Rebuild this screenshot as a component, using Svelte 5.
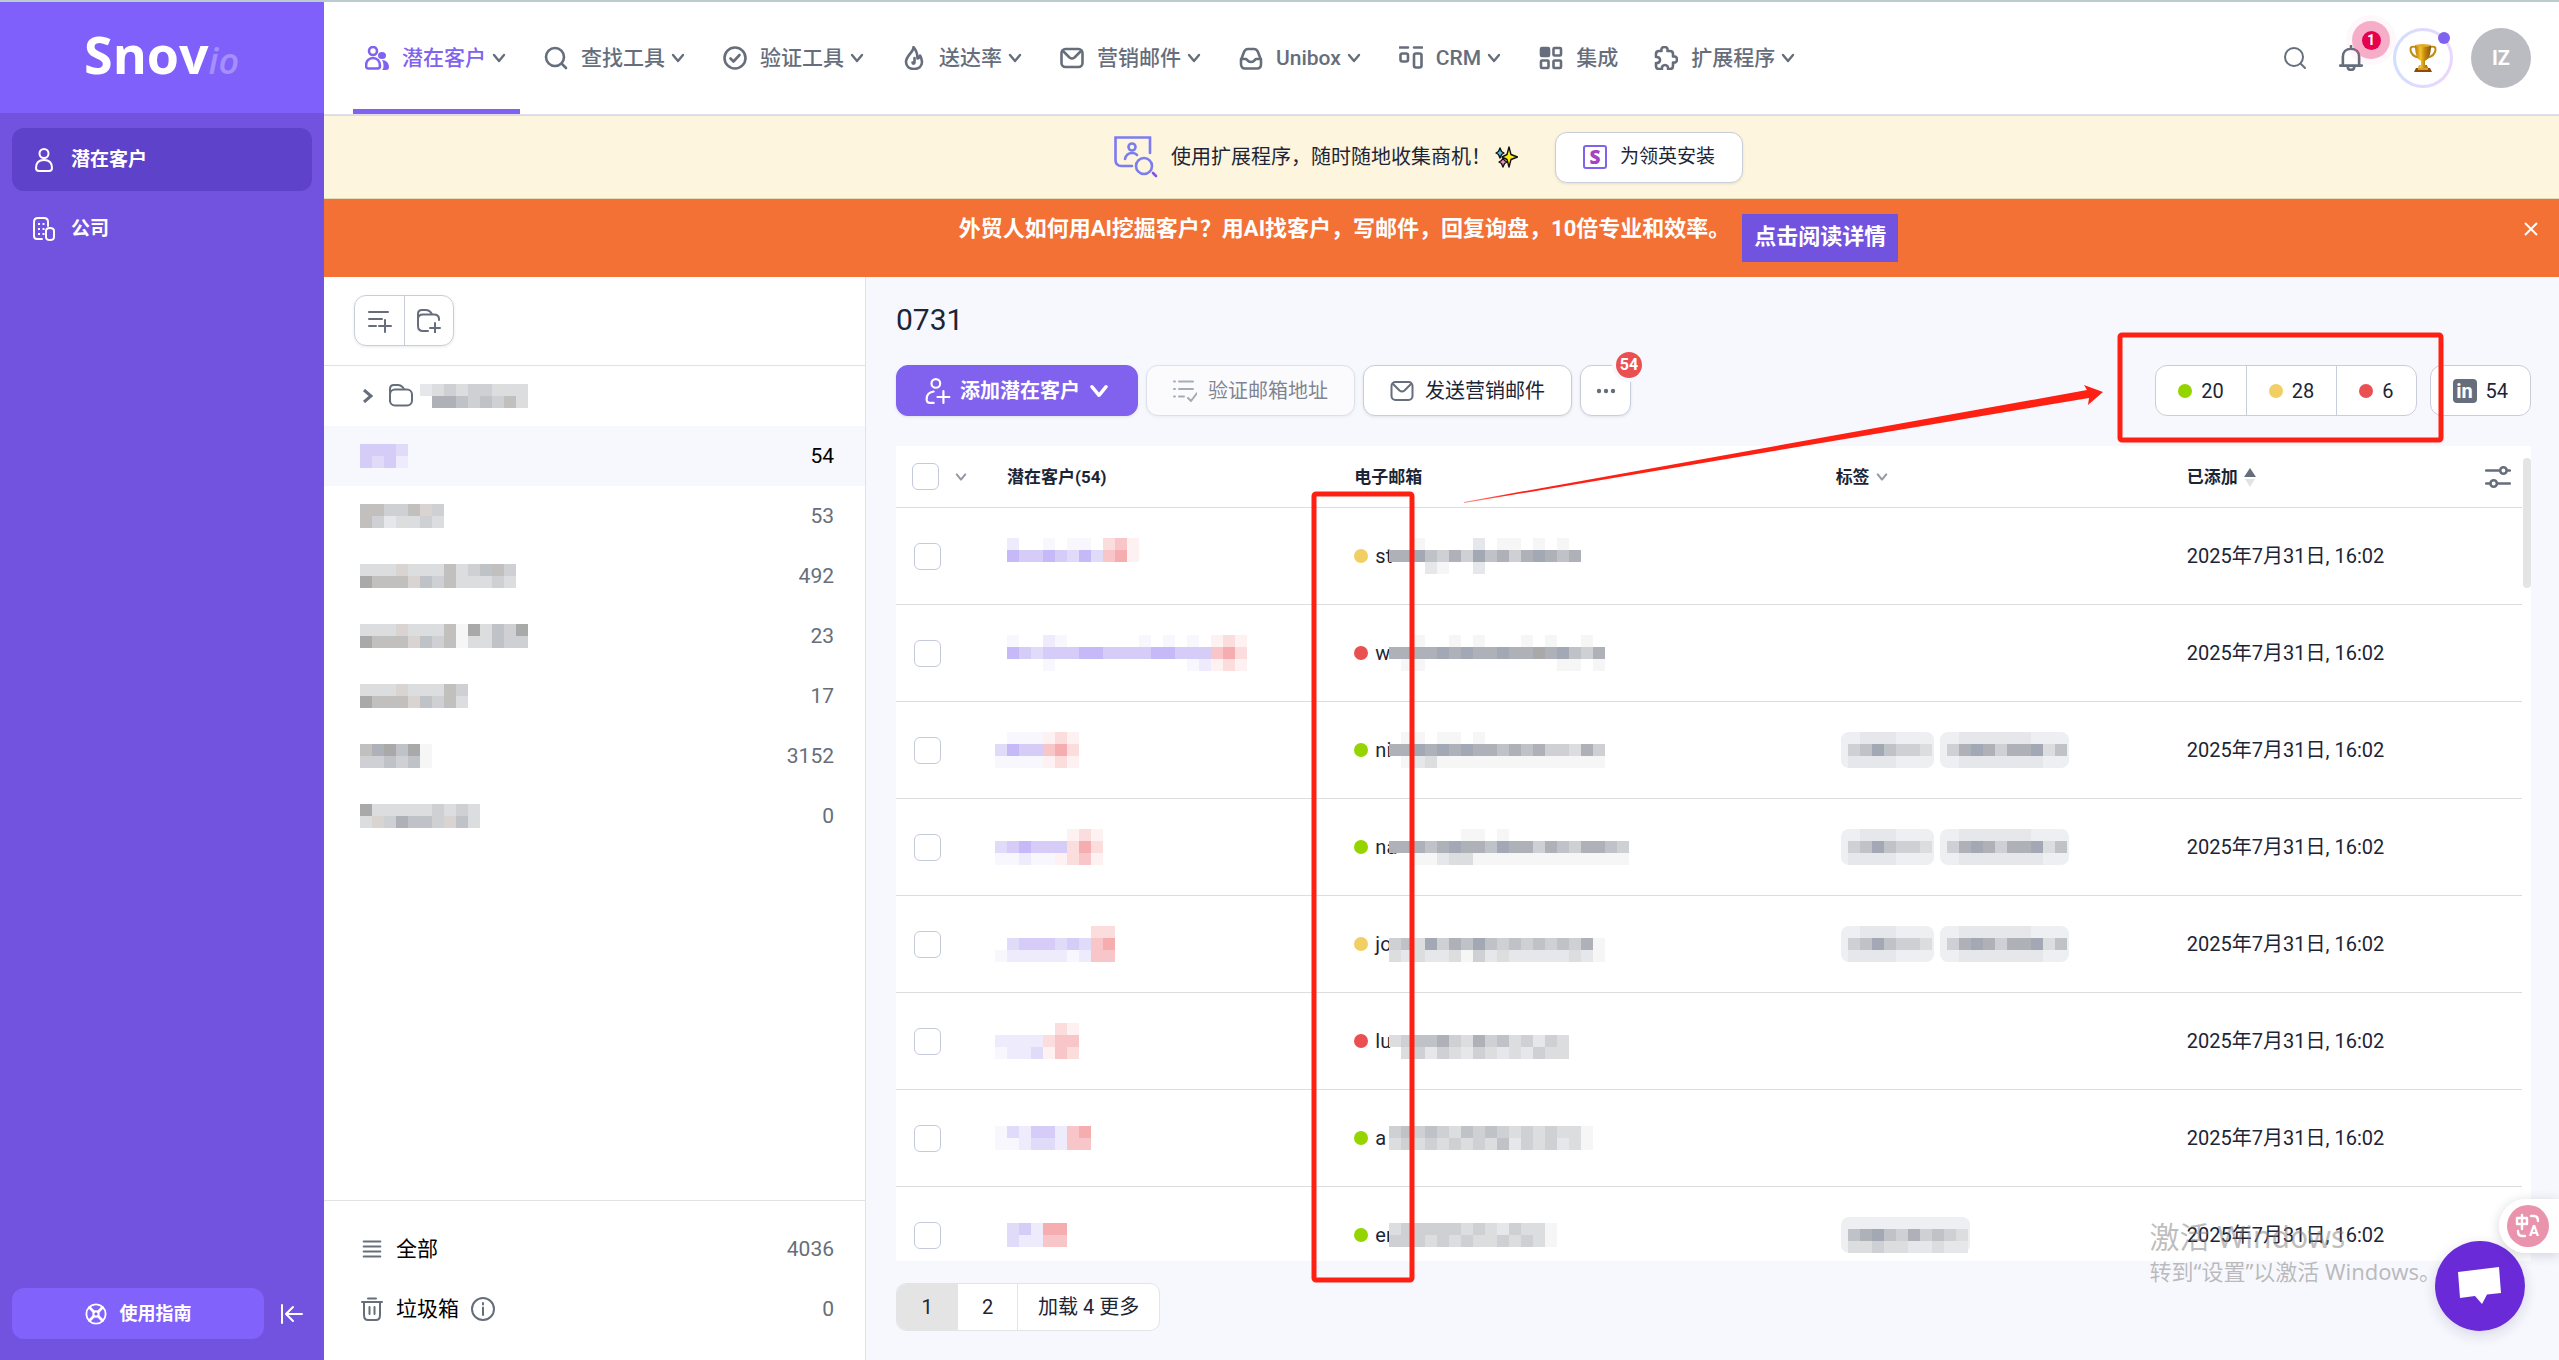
<script lang="ts">
	type Mosaic = string[];

	const icons: Record<string, string> = {
		users: '<circle cx="8" cy="5" r="4"/><path d="M1 20c0-5 3-8 7-8s7 3 7 8c0 1.500-1 2.500-2.500 2.500h-9C2 22.500 1 21.500 1 20z"/><path fill="currentColor" stroke="none" d="M17 6a4 3.500 0 1 1 0 7 4 3.500 0 0 1 0-7zM17 14c4 0 7 3 7 7 0 2-1 3-3 3h-4c1-1 1.500-2 1.500-4 0-2.500-.5-4.500-1.500-6z"/>',
		user: '<circle cx="12" cy="5.500" r="4.500"/><path d="M4 20c0-5 3-8 8-8s8 3 8 8c0 1.800-1 3-3 3H7c-2 0-3-1.200-3-3z"/>',
		search: '<circle cx="11" cy="11" r="9"/><path d="M18 18l4 4"/>',
		check: '<circle cx="12" cy="12" r="10.500"/><path d="M7.500 12.500l3 3L16.500 9"/>',
		fire: '<path d="M11.500 1C12 6 4 9.500 4 16c0 4.500 3.500 7 8 7s8-2.500 8-7c0-2.500-.8-4.500-2-6.500-.5 2-1.500 3-2.500 3C15.500 8.500 14 4 11.500 1z"/><path d="M12.500 12v4.500c0 1.500-2 1.500-2 0"/>',
		mail: '<rect x="1.500" y="3" width="21" height="18" rx="4"/><path d="M3 5l6.500 6.500c1.500 1.200 3.500 1.200 5 0L21 5"/>',
		inbox: '<path d="M2 14l3-8c.8-2 2-3 4-3h6c2 0 3.200 1 4 3l3 8v4c0 3-1.500 4.500-4 4.500H6c-2.500 0-4-1.500-4-4.500zM2 13h5c1 0 1.500 3 5 3s4-3 5-3h5"/>',
		crm: '<path d="M1 1.500h8M15 1.500h8"/><rect x="1.500" y="7.500" width="7.500" height="8" rx="2"/><rect x="15" y="7.500" width="7.500" height="14" rx="2"/>',
		grid: '<rect x="2" y="2" width="8" height="8" rx="1" fill="currentColor"/><rect x="14.500" y="2" width="7.500" height="7.500" rx="1"/><rect x="2" y="14.500" width="7.500" height="7.500" rx="1"/><rect x="14.500" y="14.500" width="7.500" height="7.500" rx="1"/>',
		puzzle: '<path d="M2 8c0-2 1-3 3-3h2.500C7 2.500 8.200 1 10.500 1S14 2.500 13.500 5H16c2 0 3 1 3 3v2.500c2.500-.5 4 .8 4 3s-1.500 3.500-4 3V20c0 2-1 3-3 3h-2c.3-2.500-1-4-3-4s-3.500 1.500-3 4H5c-2 0-3-1-3-3v-3c2.500.3 4-1 4-3s-1.500-3.300-4-3z"/>',
		bell: '<path d="M2 19h20M4.500 19v-8c0-4.500 3-7.500 7.500-7.500s7.500 3 7.500 7.500v8M12 3V1M9 20c0 2 1 3 3 3s3-1 3-3"/>',
		building: '<path d="M10 22H5c-2 0-3-1-3-3V5c0-2.500 1.500-4 4-4h6c2.500 0 4 1.500 4 4v4M14 14c0-2 1-3 4-3s4 1 4 3v6c0 2-1 3-4 3s-4-1-4-3z"/><path stroke-linecap="butt" stroke-dasharray="2 3" d="M7 6v12M11.500 6v12"/>',
		lifebuoy: '<circle cx="12" cy="12" r="10.500"/><circle cx="12" cy="12" r="3"/><path stroke-width="3" d="M9.800 9.800L5 5M14.200 9.800L19 5M9.800 14.200L5 19M14.200 14.200L19 19"/>',
		collapse: '<path d="M2 3v18M22 12H7M13 5l-7 7 7 7"/>',
		addList: '<path d="M1 3h19M1 10h13M1 17h7M11 17h12M17 11v12"/>',
		addFolder: '<path d="M11 22H6c-3 0-5-2-5-5V5c0-3 1-4 4-4h4c2 0 3 .5 4.500 2L15 5M1 10c0-3 2-4.500 5-4.500h11c3 0 5 1.500 5 4.500v1M13 19h10M18 14v10"/>',
		folder: '<path d="M1 17V5c0-3 1-4 4-4h4c2 0 3 .5 4.500 2L15 5"/><rect x="1" y="5.500" width="22" height="16" rx="5"/>',
		lines: '<path d="M2 3h20M2 9h20M2 15h20M2 21h20"/>',
		trash: '<path d="M2 5h20M8 1.500h8M4 5v13c0 3 1 5 4 5h8c3 0 4-2 4-5V5M9.500 10v7M14.500 10v7"/>',
		info: '<circle cx="12" cy="12" r="11"/><path d="M12 10.500V18M12 6v1.500"/>',
		addUser: '<circle cx="10" cy="5" r="4"/><path d="M8 23H5c-2 0-3.500-1.200-3.500-3.500C1.500 15 4 13 8 12.500M17 12v11M11.500 17.500h11"/>',
		verify: '<path d="M1 2.500h1M6 2.500h14M1 10h1M6 10h14M1 17.500h1M6 17.500h5M15 19l3 3 6-8"/>',
		sliders: '<path d="M1 6h12M21 6h2M1 18h4M12 18h11"/><circle cx="17" cy="6" r="3"/><circle cx="8" cy="18" r="3"/>'
	};

	const navItems = [
		{ label: '潜在客户', icon: 'users', menu: true, active: true },
		{ label: '查找工具', icon: 'search', menu: true },
		{ label: '验证工具', icon: 'check', menu: true },
		{ label: '送达率', icon: 'fire', menu: true },
		{ label: '营销邮件', icon: 'mail', menu: true },
		{ label: 'Unibox', icon: 'inbox', menu: true },
		{ label: 'CRM', icon: 'crm', menu: true },
		{ label: '集成', icon: 'grid', menu: false },
		{ label: '扩展程序', icon: 'puzzle', menu: true }
	];

	// One letter per 12px cell; a dot leaves the cell empty
	const palette: Record<string, string> = {
		a: '#c6b9f7', b: '#d5ccf8', c: '#e1dbfa', d: '#eeebfd', e: '#f8f7fe',
		p: '#f5adb0', q: '#f8c6c8', r: '#fbdddd', s: '#fef1f1',
		'0': '#a9a9a9', '1': '#a3a9b4', '2': '#aeb1b8', '3': '#bfc2c6', '4': '#ced0d3',
		'5': '#dcdddf', '6': '#e6e7eb', '7': '#f6f6f7', n: '#d9d4d1', m: '#c2c0bf'
	};
	const CELL = 12;

	const folders: { mosaic: Mosaic; count: number; selected?: boolean }[] = [
		{ mosaic: ['bbbc', 'bcbd'], count: 54, selected: true },
		{ mosaic: ['mm44mn4', 'm465545'], count: 53 },
		{ mosaic: ['555n555m543m4', '0mmmn34m55545'], count: 492 },
		{ mosaic: ['555n555m705340', '0mmmn34m755344'], count: 23 },
		{ mosaic: ['555n555m4', '0mmmn34m5'], count: 17 },
		{ mosaic: ['m20307', '443437'], count: 3152 },
		{ mosaic: ['0555554545', '5n42334n35'], count: 0 }
	];

	const tagPair: Mosaic[] = [
		['.666...', '4313445', '6666...'],
		['.666666...', '4212422153', '.6666666..']
	];

	const leads: { name: Mosaic; status: string; start: string; email: Mosaic; tags: Mosaic[] }[] = [
		{
			name: ['.d..e.ee.rqs', '.abbabcacqps', '............'],
			status: 'yellow', start: 'st',
			email: ['..7....6.77.7.7.', '2213424132421232', '...67..6........'],
			tags: []
		},
		{
			name: ['.e..de......e.e.e.srs', '.abcbbbaabbbbaabbbqpr', '....e...........edsrs'],
			status: 'red', start: 'w',
			email: ['..7..7.7...7.7..7.', '222212122122021342', '.77...........77.7'],
			tags: []
		},
		{
			name: ['.eeesrs', 'cabbqpr', 'eeeesrs'],
			status: 'green', start: 'ni',
			email: ['.77.77.7..........', '221212122323244524', '.76577777777777777'],
			tags: tagPair
		},
		{
			name: ['......srs', 'cbabbbrpr', 'eedeesrqs'],
			status: 'green', start: 'na',
			email: ['......77.7..........', '22232122312242342234', '..776557777777777777'],
			tags: tagPair
		},
		{
			name: ['........rr', '.cbbbcbcqp', 'edddddedqq'],
			status: 'yellow', start: 'jo',
			email: ['..................', '435142313434343427', '565665746566666567'],
			tags: tagPair
		},
		{
			name: ['.....rs', 'ddddrqq', 'eddcsqr'],
			status: 'red', start: 'lu',
			email: ['...............', '543324524354645', '.54645645656455'],
			tags: []
		},
		{
			name: ['ecdbbdqp', 'eedccdqq'],
			status: 'green', start: 'a',
			email: ['43434534345454557', '54545454536454657'],
			tags: []
		},
		{
			name: ['.cbdpp', '.cddqq'],
			status: 'green', start: 'en',
			email: ['54444454564557', '44454545545457'],
			tags: [['..........', '3213424345', '5545566566']]
		}
	];

	const stats = [
		{ status: 'green', value: 20 },
		{ status: 'yellow', value: 28 },
		{ status: 'red', value: 6 }
	];
</script>

{#snippet icon(name: string, size = 24, weight = 2)}
	<svg
		class="icon"
		width={size}
		height={size}
		viewBox="0 0 24 24"
		fill="none"
		stroke="currentColor"
		stroke-width={weight}
		stroke-linecap="round"
		stroke-linejoin="round"
		aria-hidden="true">{@html icons[name]}</svg
	>
{/snippet}

{#snippet chevron(size = 14)}
	<svg class="icon" width={size} height={size} viewBox="0 0 14 14" fill="none" stroke="currentColor" stroke-width="2.4" stroke-linecap="round" stroke-linejoin="round" aria-hidden="true">
		<path d="M2 4l5 6 5-6" />
	</svg>
{/snippet}

{#snippet mosaic(rows: Mosaic)}
	<svg class="mosaic" width={rows[0].length * CELL} height={rows.length * CELL} shape-rendering="crispEdges" aria-hidden="true">
		{#each rows as row, y}
			{#each row as cell, x}
				{#if cell !== '.'}
					<rect x={x * CELL} y={y * CELL} width={CELL} height={CELL} fill={palette[cell]} />
				{/if}
			{/each}
		{/each}
	</svg>
{/snippet}

<div class="page">
	<aside class="sidebar">
		<a class="logo" href="#home">Snov<i>io</i></a>
		<nav class="side-nav">
			<a class="side-item active" href="#leads">{@render icon('user')}<span>潜在客户</span></a>
			<a class="side-item" href="#companies">{@render icon('building')}<span>公司</span></a>
		</nav>
		<div class="side-footer">
			<button class="guide">{@render icon('lifebuoy', 22)}<span>使用指南</span></button>
			<button class="collapse" aria-label="收起">{@render icon('collapse')}</button>
		</div>
	</aside>

	<div class="content">
		<header class="topbar">
			<nav class="nav">
				{#each navItems as item}
					<a class="nav-item" class:active={item.active} href="#{item.icon}">
						{@render icon(item.icon, 24, 2.6)}
						<span>{item.label}</span>
						{#if item.menu}<span class="nav-chevron">{@render chevron()}</span>{/if}
					</a>
				{/each}
			</nav>
			<div class="account">
				<button class="plain" aria-label="搜索">{@render icon('search')}</button>
				<button class="plain bell" aria-label="通知">
					{@render icon('bell', 26, 2.4)}
					<span class="bell-badge"><b>1</b></span>
				</button>
				<button class="trophy" aria-label="成就">
					<svg width="28" height="30" viewBox="0 0 28 30" aria-hidden="true">
						<defs>
							<linearGradient id="gold" x1="0" x2="1">
								<stop offset="0" stop-color="#b87a08" />
								<stop offset=".35" stop-color="#f3c32c" />
								<stop offset=".6" stop-color="#c48a0e" />
								<stop offset="1" stop-color="#8a5706" />
							</linearGradient>
						</defs>
						<path d="M7 4C3 3 1 4 1.500 7c.5 3.500 3 6.500 8 7.500M21 4c4-1 6 0 5.500 3-.5 3.500-3 6.500-8 7.500" fill="none" stroke="#c08a17" stroke-width="2" />
						<path d="M6 2h16c0 9-2 14-6 16v4h2l1 3H9l1-3h2v-4C8 16 6 11 6 2z" fill="url(#gold)" />
						<path d="M7 25h14l2 4H5z" fill="#8d4a0b" />
						<path d="M9 25h10v2H9z" fill="#d6a12a" />
						<ellipse cx="14" cy="2.500" rx="8" ry="1.500" fill="#e0ac2c" />
					</svg>
					<span class="trophy-dot"></span>
				</button>
				<button class="avatar">IZ</button>
			</div>
		</header>

		<section class="promo">
			<svg width="44" height="42" viewBox="0 0 44 42" fill="none" stroke="#7b7cf0" stroke-width="2.6" stroke-linecap="round" aria-hidden="true">
				<path d="M36 17V1.500H1.500V24c0 4 2 6 6 6H18" />
				<circle cx="18" cy="11" r="3.500" />
				<path d="M11 23c1-4 3.500-6 7-6 2 0 4 .6 5 2" />
				<circle cx="30" cy="30" r="8" />
				<path d="M39 37l3 3" stroke="#7f55ea" />
			</svg>
			<span class="promo-text">使用扩展程序，随时随地收集商机！</span>
			<svg width="23" height="22" viewBox="0 0 23 22" stroke="#111" stroke-width="1.4" stroke-linejoin="round" aria-hidden="true">
				<path d="M5 2l1.500 3.500L9 7 6.500 8.500 5 12 3.500 8.500 1 7l2.500-1.500z" fill="#5cc4ee" />
				<path d="M8 12l1.500 2.500L12 16l-2.500 1.500L8 21l-1.500-3.500L4 16l2.500-1.500z" fill="#f492c4" />
				<path d="M14 1l2 7.500 6.500 2.500-6.500 2.500-2 7.500-2-7.500L7 11l5-2.500z" fill="#ffec15" />
			</svg>
			<button class="promo-button">
				<span class="s-mark">S</span>
				<span>为领英安装</span>
			</button>
		</section>

		<section class="banner">
			<p>外贸人如何用AI挖掘客户？用AI找客户，写邮件，回复询盘，10倍专业和效率。</p>
			<a class="banner-link" href="#read">点击阅读详情</a>
			<button class="banner-close" aria-label="关闭">
				<svg width="14" height="14" viewBox="0 0 14 14" stroke="#fff" stroke-width="2" aria-hidden="true"><path d="M1 1l12 12M13 1L1 13" /></svg>
			</button>
		</section>

		<div class="workspace">
			<section class="lists">
				<div class="lists-head">
					<div class="split">
						<button aria-label="新建列表">{@render icon('addList')}</button>
						<button aria-label="新建文件夹">{@render icon('addFolder')}</button>
					</div>
				</div>
				<div class="folder-row">
					<svg class="icon" width="12" height="14" viewBox="0 0 12 14" fill="none" stroke="currentColor" stroke-width="3" aria-hidden="true"><path d="M2 1l7 6-7 6" /></svg>
					<span class="folder-name">{@render icon('folder')}{@render mosaic(['654544555', '.223434m5'])}</span>
				</div>
				<ul class="list-rows">
					{#each folders as folder}
						<li class="list-row" class:selected={folder.selected}>
							{@render mosaic(folder.mosaic)}
							<span class="count">{folder.count}</span>
						</li>
					{/each}
				</ul>
				<ul class="list-rows list-foot">
					<li class="list-row">{@render icon('lines', 20, 2.4)}<span>全部</span><span class="count">4036</span></li>
					<li class="list-row">{@render icon('trash')}<span>垃圾箱</span>{@render icon('info')}<span class="count">0</span></li>
				</ul>
			</section>

			<main class="main">
				<h1>0731</h1>
				<div class="toolbar">
					<button class="btn primary">{@render icon('addUser', 26)}<span>添加潜在客户</span>{@render chevron(20)}</button>
					<button class="btn" disabled>{@render icon('verify')}<span>验证邮箱地址</span></button>
					<button class="btn">{@render icon('mail')}<span>发送营销邮件</span></button>
					<button class="btn more" aria-label="更多">
						<svg width="20" height="6" viewBox="0 0 20 6" fill="#666e7c" aria-hidden="true"><circle cx="3" cy="3" r="2.2" /><circle cx="10" cy="3" r="2.2" /><circle cx="17" cy="3" r="2.2" /></svg>
						<span class="more-badge">54</span>
					</button>
					<div class="stats">
						{#each stats as stat}
							<button><span class="dot {stat.status}"></span>{stat.value}</button>
						{/each}
					</div>
					<div class="stats linkedin">
						<button><span class="in-mark">in</span>54</button>
					</div>
				</div>

				<div class="table-wrap">
					<table>
						<colgroup>
							<col class="c-check" /><col class="c-name" /><col class="c-email" /><col class="c-tags" /><col />
						</colgroup>
						<thead>
							<tr>
								<th class="check-cell">
									<div class="head-check">
										<input type="checkbox" aria-label="全选" />
										<span class="muted">{@render chevron(12)}</span>
									</div>
								</th>
								<th class="name-head">潜在客户(54)</th>
								<th>电子邮箱</th>
								<th><span class="head-flex">标签 <span class="muted">{@render chevron(12)}</span></span></th>
								<th>
									<span class="head-flex">
										已添加
										<svg width="12" height="20" viewBox="0 0 12 20" aria-hidden="true"><path d="M6 1l6 9H0z" fill="#666e7c" /><path d="M6 20l-5-8h10z" fill="#e2e3e6" /></svg>
										<button class="plain settings" aria-label="列设置">{@render icon('sliders', 26, 2.4)}</button>
									</span>
								</th>
							</tr>
						</thead>
						<tbody>
							{#each leads as lead}
								<tr>
									<td class="check-cell"><input type="checkbox" aria-label="选择" /></td>
									<td>{@render mosaic(lead.name)}</td>
									<td>
										<div class="email">
											<span class="dot {lead.status}"></span>
											<span class="email-start">{lead.start}</span>
											{@render mosaic(lead.email)}
										</div>
									</td>
									<td>
										<div class="tags">
											{#each lead.tags as tag}
												<span class="tag">{@render mosaic(tag)}</span>
											{/each}
										</div>
									</td>
									<td>2025年7月31日, 16:02</td>
								</tr>
							{/each}
						</tbody>
					</table>
					<div class="scroll-thumb"></div>
				</div>

				<div class="pager">
					<button class="current">1</button>
					<button>2</button>
					<button>加载 4 更多</button>
				</div>
			</main>
		</div>
	</div>

	<div class="watermark">
		<div class="watermark-title">激活 Windows</div>
		<div>转到“设置”以激活 Windows。</div>
	</div>

	<button class="chat" aria-label="聊天">
		<svg width="44" height="38" viewBox="0 0 44 38" fill="#fff" aria-hidden="true"><path d="M0 5L41 0l2 26-14 1.500L24 37l-7-8-15 2z" /></svg>
	</button>

	<div class="translate">
		<svg width="42" height="42" viewBox="0 0 42 42" aria-hidden="true">
			<circle cx="21" cy="21" r="21" fill="#e993ac" />
			<g fill="none" stroke="#fff" stroke-width="2.4" stroke-linecap="round" stroke-linejoin="round">
				<path d="M10 13h10v6H10zM15 10v14M24 11h3c3 0 4 2 4 5M11 26c0 3 1 5 4 5h3" />
			</g>
			<text x="22" y="31" font-size="15" font-weight="700" fill="#fff">A</text>
		</svg>
	</div>

	<svg class="annotations" aria-hidden="true">
		<defs>
			<linearGradient id="tail" gradientUnits="userSpaceOnUse" x1="1464" y1="0" x2="1560" y2="0">
				<stop offset="0" stop-color="#ff2014" stop-opacity="0.5" />
				<stop offset="0.5" stop-color="#ff2014" />
			</linearGradient>
		</defs>
		<rect x="1314" y="494" width="98" height="786" rx="2" />
		<rect x="2120" y="335" width="321" height="105" rx="2" />
		<path d="M1464 502L2087 390 2084 385 2103 392 2088 405 2089 398 1464 503z" fill="url(#tail)" />
	</svg>
</div>

<style>
	:global(body) {
		margin: 0;
	}
	.page {
		position: relative;
		display: flex;
		box-sizing: border-box;
		height: 100vh;
		overflow: hidden;
		border-top: 2px solid #bccccc;
		background: #f7f8fd;
		color: #1c2536;
		font-family: Roboto, 'Noto Sans CJK SC', sans-serif;
		font-size: 20px;
		line-height: 30px;
	}
	button {
		padding: 0;
		border: 0;
		background: none;
		color: inherit;
		font: inherit;
		cursor: pointer;
	}
	a {
		color: inherit;
		text-decoration: none;
	}
	ul {
		margin: 0;
		padding: 0;
		list-style: none;
	}
	.icon,
	.mosaic {
		display: block;
		flex: none;
	}

	/* Sidebar */
	.sidebar {
		display: flex;
		flex-direction: column;
		flex: none;
		width: 324px;
		background: #7153e0;
		color: #fff;
	}
	.logo {
		display: flex;
		align-items: baseline;
		box-sizing: border-box;
		height: 111px;
		padding: 18px 0 0 84px;
		background: #8060fb;
		font-family: 'Open Sans', sans-serif;
		font-size: 52px;
		font-weight: 700;
		line-height: 68px;
	}
	.logo i {
		color: #a48ffc;
		font-size: 36px;
		font-weight: 600;
	}
	.side-nav {
		display: flex;
		flex-direction: column;
		flex: 1;
		gap: 6px;
		padding: 15px 12px;
	}
	.side-item {
		display: flex;
		align-items: center;
		gap: 15px;
		height: 63px;
		padding-left: 20px;
		border-radius: 12px;
		font-size: 19px;
		font-weight: 700;
	}
	.side-item.active {
		background: #5e42ca;
	}
	.side-footer {
		display: flex;
		align-items: center;
		gap: 16px;
		padding: 0 20px 21px 12px;
	}
	.guide {
		display: flex;
		align-items: center;
		justify-content: center;
		flex: 1;
		gap: 13px;
		height: 51px;
		border-radius: 12px;
		background: #8162fa;
		font-size: 18px;
		font-weight: 700;
	}

	/* Top bar */
	.content {
		display: flex;
		flex-direction: column;
		flex: 1;
		min-width: 0;
	}
	.topbar {
		display: flex;
		justify-content: space-between;
		height: 112px;
		padding: 0 28px 0 29px;
		border-bottom: 1px solid #dfe0ec;
		background: #fff;
	}
	.nav {
		display: flex;
		gap: 12px;
	}
	.nav-item {
		display: flex;
		align-items: center;
		gap: 13px;
		padding: 5px 12px 0;
		border-bottom: 5px solid transparent;
		color: #666e7c;
		font-size: 21px;
		font-weight: 500;
	}
	.nav-item.active {
		border-color: #8062f0;
		border-radius: 4px 4px 0 0;
		color: #8062f0;
	}
	.nav-chevron {
		width: 16px;
		margin-left: -7px;
		color: #666e7c;
	}
	.account {
		display: flex;
		align-items: center;
		color: #666e7c;
	}
	.bell {
		position: relative;
		margin: 0 29px 0 31px;
	}
	.bell-badge {
		position: absolute;
		top: -24px;
		left: 14px;
		display: flex;
		align-items: center;
		justify-content: center;
		width: 38px;
		height: 38px;
		border-radius: 50%;
		background: rgba(236, 76, 134, 0.45);
		box-shadow: 0 0 0 6px rgba(236, 76, 134, 0.04);
	}
	.bell-badge b {
		width: 19px;
		height: 19px;
		border-radius: 50%;
		background: #e6004d;
		color: #fff;
		font-size: 14px;
		line-height: 19px;
	}
	.trophy {
		position: relative;
		display: flex;
		align-items: center;
		justify-content: center;
		width: 60px;
		height: 60px;
		border: 3px solid transparent;
		border-radius: 50%;
		background:
			linear-gradient(#fff, #fff) padding-box,
			linear-gradient(90deg, #d2defe, #ecd6fd) border-box;
	}
	.trophy-dot {
		position: absolute;
		top: 1px;
		right: 0;
		width: 12px;
		height: 12px;
		border-radius: 50%;
		background: #8062f0;
	}
	.avatar {
		width: 60px;
		height: 60px;
		margin-left: 18px;
		border-radius: 50%;
		background: #bbbcc2;
		color: #fff;
		font-weight: 700;
	}

	/* Banners */
	.promo {
		display: flex;
		align-items: center;
		justify-content: center;
		height: 82px;
		padding-right: 26px;
		border-top: 1px solid #e8dfa8;
		border-bottom: 1px solid #e3dcb4;
		background: #fdf5dd;
	}
	.promo-text {
		margin: 0 4px 0 13px;
	}
	.promo-button {
		display: flex;
		align-items: center;
		gap: 13px;
		height: 51px;
		margin-left: 37px;
		padding: 0 27px;
		border: 1px solid #c9cdda;
		border-radius: 12px;
		background: #fff;
		box-shadow: 0 1px 3px rgba(30, 40, 70, 0.1);
		font-size: 19px;
	}
	.s-mark {
		box-sizing: border-box;
		width: 24px;
		height: 24px;
		border: 2px solid #7f62ee;
		border-radius: 3px;
		color: #a244c4;
		font-family: 'Open Sans', sans-serif;
		font-weight: 800;
		line-height: 20px;
	}
	.banner {
		position: relative;
		display: flex;
		align-items: flex-start;
		justify-content: center;
		gap: 12px;
		height: 63px;
		padding: 15px 26px 0 0;
		background: #f37135;
		color: #fff;
		font-size: 22px;
		font-weight: 700;
	}
	.banner p {
		margin: 0;
	}
	.banner-link {
		padding: 8px 12px 10px;
		background: #7153e0;
	}
	.banner-close {
		position: absolute;
		top: 15px;
		right: 21px;
		width: 14px;
		height: 30px;
		line-height: 30px;
	}

	/* Lists column */
	.workspace {
		display: flex;
		flex: 1;
		min-height: 0;
	}
	.lists {
		display: flex;
		flex-direction: column;
		flex: none;
		width: 541px;
		border-right: 1px solid #e1e2e8;
		background: #fff;
		font-size: 21px;
	}
	.lists-head {
		height: 70px;
		padding: 18px 30px 0;
		border-bottom: 1px solid #e1e2e5;
	}
	.split {
		display: inline-flex;
		border: 1px solid #c9cdda;
		border-radius: 12px;
		box-shadow: 0 1px 3px rgba(30, 40, 70, 0.1);
		color: #666e7c;
	}
	.split button {
		display: flex;
		align-items: center;
		justify-content: center;
		width: 49px;
		height: 49px;
	}
	.split button + button {
		border-left: 1px solid #c9cdda;
	}
	.folder-row {
		display: flex;
		align-items: center;
		gap: 15px;
		height: 60px;
		padding-left: 38px;
		color: #666e7c;
	}
	.folder-name {
		display: flex;
		align-items: center;
		gap: 7px;
	}
	.list-rows {
		color: #000;
	}
	.list-row {
		display: flex;
		align-items: center;
		gap: 12px;
		height: 60px;
		padding: 0 31px 0 36px;
	}
	.list-row.selected {
		background: #f7f8fd;
	}
	.count {
		margin-left: auto;
		color: #666e7c;
	}
	.selected .count {
		color: #000;
	}
	.list-foot {
		margin-top: auto;
		padding: 18px 0 21px;
		border-top: 1px solid #e1e2e5;
	}
	.list-foot :global(.icon) {
		width: 24px;
		color: #666e7c;
	}

	/* Main column */
	.main {
		display: flex;
		flex-direction: column;
		flex: 1;
		min-width: 0;
		padding: 25px 28px 29px 30px;
	}
	h1 {
		margin: 0 0 27px;
		font-size: 30px;
		font-weight: 400;
		line-height: 36px;
	}
	.toolbar {
		display: flex;
		gap: 8px;
		margin-bottom: 30px;
	}
	.btn {
		position: relative;
		display: flex;
		align-items: center;
		justify-content: center;
		box-sizing: border-box;
		gap: 11px;
		height: 51px;
		padding: 0 26px;
		border: 1px solid #c9cdda;
		border-radius: 12px;
		background: #fff;
		box-shadow: 0 1px 3px rgba(30, 40, 70, 0.1);
	}
	.btn :global(.icon) {
		color: #666e7c;
	}
	.btn:disabled {
		opacity: 0.55;
	}
	.btn.primary {
		gap: 9px;
		padding: 0 28px;
		border-color: #8062ee;
		background: #8062ee;
		color: #fff;
		font-weight: 700;
	}
	.btn.primary :global(.icon) {
		color: #fff;
	}
	.btn.more {
		width: 51px;
		padding: 0;
	}
	.more-badge {
		position: absolute;
		top: -14px;
		right: -12px;
		width: 26px;
		height: 26px;
		border-radius: 50%;
		background: #ea4f51;
		box-shadow: 0 0 0 4px #f7f8fd;
		color: #fff;
		font-size: 16px;
		font-weight: 700;
		line-height: 26px;
	}
	.stats {
		display: flex;
		box-sizing: border-box;
		height: 51px;
		margin-left: auto;
		border: 1px solid #c9cdda;
		border-radius: 12px;
		background: #fff;
	}
	.stats.linkedin {
		margin-left: 5px;
	}
	.stats button {
		display: flex;
		align-items: center;
		gap: 9px;
		padding: 0 22px;
	}
	.stats button + button {
		border-left: 1px solid #c9cdda;
	}
	.dot {
		flex: none;
		width: 14px;
		height: 14px;
		border-radius: 50%;
	}
	.green {
		background: #94d500;
	}
	.yellow {
		background: #f2cf63;
	}
	.red {
		background: #ea4f51;
	}
	.in-mark {
		width: 24px;
		height: 24px;
		border-radius: 4px;
		background: #666e7c;
		color: #fff;
		font-weight: 700;
		line-height: 24px;
	}

	/* Leads table */
	.table-wrap {
		position: relative;
		flex: 1;
		min-height: 0;
		overflow: hidden;
		background: #fff;
	}
	table {
		width: calc(100% - 9px);
		border-collapse: collapse;
		table-layout: fixed;
	}
	.c-check {
		width: 99px;
	}
	.c-name {
		width: 22.1%;
	}
	.c-email {
		width: 29.6%;
	}
	.c-tags {
		width: 21.6%;
	}
	th,
	td {
		padding: 0;
		border-bottom: 1px solid #dcdddf;
		text-align: left;
	}
	th {
		height: 61px;
		font-size: 17px;
		font-weight: 700;
	}
	td {
		height: 96px;
	}
	.check-cell {
		padding-left: 18px;
	}
	th.check-cell {
		padding-left: 16px;
	}
	.name-head {
		padding-left: 12px;
	}
	.head-check,
	.head-flex {
		display: flex;
		align-items: center;
		gap: 6px;
	}
	.head-check {
		gap: 16px;
	}
	.muted {
		color: #9599a3;
	}
	.settings {
		margin: 0 11px 0 auto;
		color: #666e7c;
	}
	input[type='checkbox'] {
		appearance: none;
		display: block;
		flex: none;
		box-sizing: border-box;
		width: 27px;
		height: 27px;
		margin: 0;
		border: 1px solid #c5cadb;
		border-radius: 6px;
		background: #fff;
	}
	.email {
		display: flex;
		align-items: center;
	}
	.email-start {
		width: 14px;
		margin-left: 7px;
		white-space: nowrap;
	}
	.email :global(.mosaic) {
		position: relative;
	}
	.tags {
		display: flex;
		gap: 6px;
		padding-left: 5px;
	}
	.tag {
		padding: 0 2px 0 7px;
		border-radius: 8px;
		background: #eeeff3;
	}
	.scroll-thumb {
		position: absolute;
		top: 12px;
		right: 0;
		width: 8px;
		height: 130px;
		border-radius: 4px;
		background: #e4e4e4;
	}
	.pager {
		display: flex;
		align-self: flex-start;
		box-sizing: border-box;
		height: 48px;
		margin-top: 22px;
		overflow: hidden;
		border: 1px solid #e3e4e8;
		border-radius: 10px;
		background: #fff;
	}
	.pager button {
		min-width: 60px;
		padding: 0 20px;
	}
	.pager button + button {
		border-left: 1px solid #e3e4e8;
	}
	.pager .current {
		background: #e4e4e4;
	}

	/* Floating layers */
	.watermark {
		position: absolute;
		right: 118px;
		bottom: 74px;
		color: rgba(125, 125, 125, 0.5);
		font-family: 'Noto Sans', 'Noto Sans CJK SC', sans-serif;
		font-size: 22px;
		pointer-events: none;
	}
	.watermark-title {
		font-size: 30px;
		line-height: 38px;
	}
	.chat {
		position: absolute;
		right: 34px;
		bottom: 29px;
		display: flex;
		align-items: center;
		justify-content: center;
		width: 90px;
		height: 90px;
		border-radius: 50%;
		background: #6a2ad8;
		box-shadow: 0 4px 14px rgba(30, 20, 80, 0.15);
	}
	.translate {
		position: absolute;
		right: 0;
		bottom: 107px;
		display: flex;
		align-items: center;
		width: 52px;
		height: 54px;
		padding-left: 8px;
		border-radius: 27px 0 0 27px;
		background: rgba(255, 255, 255, 0.85);
		box-shadow: 0 2px 12px rgba(30, 30, 60, 0.18);
	}
	.annotations {
		position: absolute;
		top: -2px;
		left: 0;
		width: 100%;
		height: calc(100% + 2px);
		pointer-events: none;
	}
	.annotations rect {
		fill: none;
		stroke: #ff2014;
		stroke-width: 5;
	}
</style>
